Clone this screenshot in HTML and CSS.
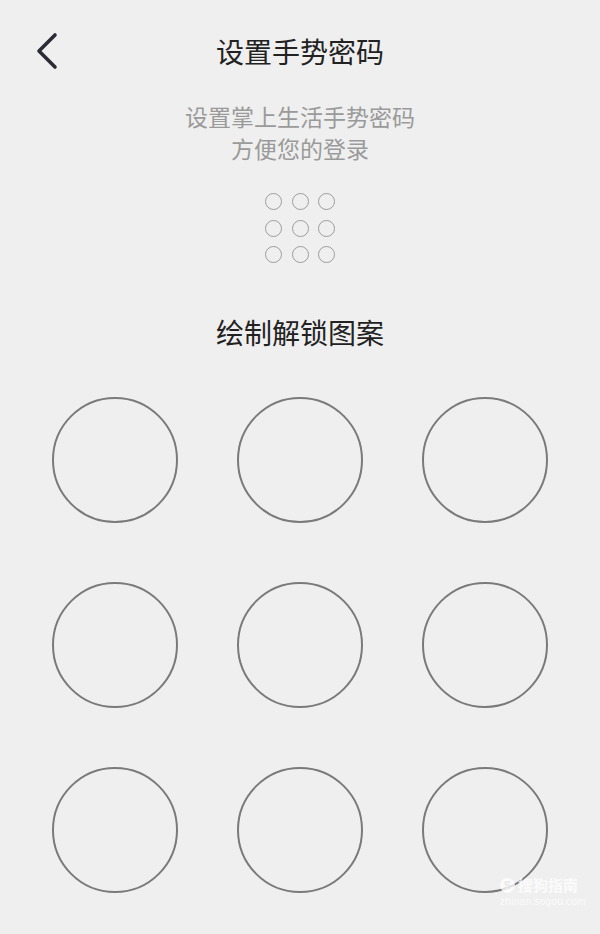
FILE: index.html
```html
<!DOCTYPE html>
<html lang="zh-CN">
<head>
    <meta charset="UTF-8">
    <meta name="viewport" content="width=device-width, initial-scale=1.0">
    <title>设置手势密码</title>
    <link rel="stylesheet" href="styles.css">
</head>
<body>
    <div class="page">
        <div class="header">
            <button class="back" type="button" aria-label="返回">
                <svg width="24" height="38" viewBox="0 0 24 38">
                    <path d="M20 3 L4 19 L20 35" fill="none" stroke="#2b2b36" stroke-width="3.6" stroke-linecap="round" stroke-linejoin="round"/>
                </svg>
            </button>
            <h2 class="title">设置手势密码</h2>
            <div></div>
        </div>

        <p class="tip">设置掌上生活手势密码<br>方便您的登录</p>

        <div class="preview">
            <span></span><span></span><span></span>
            <span></span><span></span><span></span>
            <span></span><span></span><span></span>
        </div>

        <h3 class="label">绘制解锁图案</h3>

        <div class="pad">
            <div class="dot"></div><div class="dot"></div><div class="dot"></div>
            <div class="dot"></div><div class="dot"></div><div class="dot"></div>
            <div class="dot"></div><div class="dot"></div><div class="dot"></div>
        </div>

        <div class="mark">
            <div class="mark-top"><span class="mark-icon">S</span>搜狗指南</div>
            <div class="mark-url">zhinan.sogou.com</div>
        </div>
    </div>
</body>
</html>
```

FILE: styles.css
```css
body {
    margin: 0;
    background-color: #efefef;
    font-family: 'Noto Sans CJK SC', 'Noto Sans', sans-serif;
}
.page {
    position: relative;
    width: 600px;
    height: 934px;
    overflow: hidden;
}
.header {
    display: grid;
    grid-template-columns: 1fr auto 1fr;
    align-items: center;
    height: 96px;
    margin-top: 3px;
}
.back {
    justify-self: start;
    margin-left: 35px;
    padding: 0;
    border: none;
    background: none;
    display: flex;
}
.title {
    margin: 0;
    font-size: 28px;
    font-weight: 400;
    color: #222;
    line-height: 40px;
}
.tip {
    margin: 1px 0 0;
    text-align: center;
    font-size: 23px;
    line-height: 32px;
    color: #9a9a9a;
}
.preview {
    display: grid;
    grid-template-columns: repeat(3, 17px);
    grid-auto-rows: 17px;
    gap: 9.5px;
    justify-content: center;
    margin-top: 29px;
}
.preview span {
    box-sizing: border-box;
    border: 1px solid #9c9c9c;
    border-radius: 50%;
}
.label {
    margin: 49px 0 0;
    text-align: center;
    font-size: 28px;
    font-weight: 400;
    line-height: 40px;
    color: #222;
}
.pad {
    display: grid;
    grid-template-columns: repeat(3, 126px);
    grid-auto-rows: 126px;
    column-gap: 59px;
    row-gap: 59px;
    justify-content: center;
    margin-top: 45px;
}
.dot {
    box-sizing: border-box;
    border: 2px solid #7a7a7a;
    border-radius: 50%;
}
.mark {
    position: absolute;
    left: 500px;
    top: 876px;
    color: rgba(255, 255, 255, 0.75);
    text-align: center;
}
.mark-top {
    display: flex;
    align-items: center;
    gap: 3px;
    font-size: 15px;
    line-height: 18px;
    font-weight: 700;
}
.mark-icon {
    display: inline-flex;
    align-items: center;
    justify-content: center;
    width: 15px;
    height: 15px;
    border-radius: 50%;
    background: rgba(255, 255, 255, 0.75);
    color: #e6e6e6;
    font-size: 11px;
    font-family: 'Liberation Sans', sans-serif;
}
.mark-url {
    font-family: 'Liberation Sans', sans-serif;
    font-size: 10px;
    line-height: 16px;
    letter-spacing: 0.3px;
}
```
